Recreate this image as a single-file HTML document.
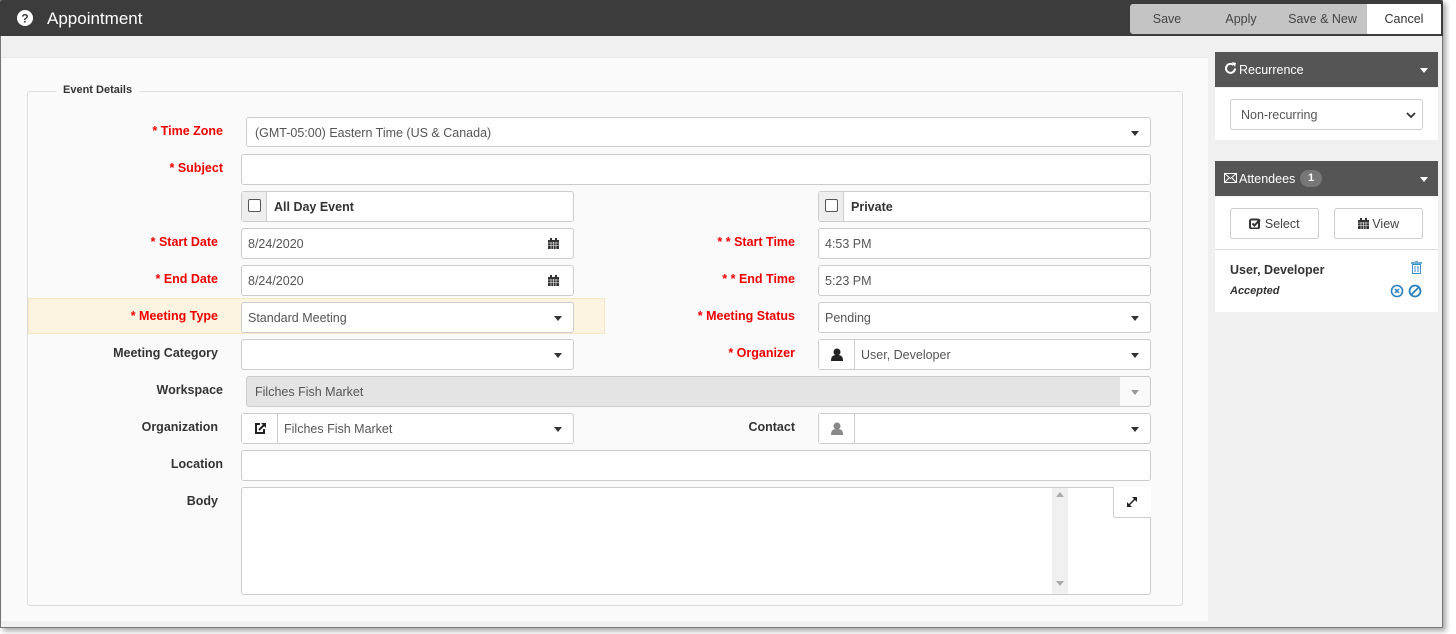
<!DOCTYPE html>
<html><head><style>
*{box-sizing:border-box;margin:0;padding:0}
body{width:1456px;height:634px;background:#fff;font-family:"Liberation Sans",sans-serif;font-size:12px;color:#333;position:relative;overflow:hidden}
.a{position:absolute}
.win{left:0;top:0;width:1443px;height:628px;background:#f0f0f0;border:1px solid #777;box-shadow:3px 3px 5px rgba(0,0,0,.35)}
.hdr{left:0;top:0;width:1443px;height:36px;background:#3c3c3c;border-radius:3px 3px 0 0}
.lbl{font-weight:bold;font-size:12.5px;text-align:right;width:200px;color:#333}
.req{color:#e00}
.in{background:#fff;border:1px solid #ccc;border-radius:3px;height:31px;font-size:12.5px;color:#555;padding-left:8px;line-height:31px}
.caret{position:absolute;right:11px;top:13px;width:0;height:0;border-left:4.5px solid transparent;border-right:4.5px solid transparent;border-top:5px solid #333}
.addon{position:absolute;left:0;top:0;bottom:0;width:36px;border-right:1px solid #ccc;background:#fff}
.btn{color:#444;font-size:12.5px;text-align:center;line-height:32px;height:32px;top:4px}
</style></head><body>
<div class="a win"></div>
<div class="a hdr"></div>
<svg class="a" style="left:17px;top:10px" width="16" height="16"><circle cx="8" cy="8" r="8" fill="#fff"/><text x="8" y="12.5" font-size="12" font-weight="bold" text-anchor="middle" fill="#3c3c3c" font-family="Liberation Sans">?</text></svg>
<div class="a" style="left:47px;top:9px;color:#fff;font-size:17px">Appointment</div>
<div class="a" style="left:1130px;top:4px;width:311px;height:30px;background:#c4c4c4;border-radius:3px"></div>
<div class="a btn" style="left:1130px;width:74px;height:30px;line-height:30px">Save</div>
<div class="a btn" style="left:1204px;width:74px;height:30px;line-height:30px">Apply</div>
<div class="a btn" style="left:1278px;width:89px;height:30px;line-height:30px">Save &amp; New</div>
<div class="a btn" style="left:1367px;width:74px;height:30px;line-height:30px;background:#fff;color:#333">Cancel</div>

<div class="a" style="left:2px;top:57px;width:1206px;height:564px;background:#fafafa;border-top:1px solid #e6e6e6"></div>
<div class="a" style="left:27px;top:91px;width:1156px;height:515px;border:1px solid #ddd;border-radius:3px"></div>
<div class="a" style="left:56px;top:84px;padding:0 7px;background:#fafafa;font-weight:bold;font-size:11px;color:#333">Event Details</div>

<div class="a" style="left:28px;top:298px;width:577px;height:36px;background:#fcf4e1;border:1px solid #f5e6c4"></div>

<div class="a lbl req" style="left:23px;top:124px">* Time Zone</div>
<div class="a lbl req" style="left:23px;top:161px">* Subject</div>
<div class="a lbl req" style="left:18px;top:235px">* Start Date</div>
<div class="a lbl req" style="left:18px;top:272px">* End Date</div>
<div class="a lbl req" style="left:18px;top:309px">* Meeting Type</div>
<div class="a lbl" style="left:18px;top:346px">Meeting Category</div>
<div class="a lbl" style="left:23px;top:383px">Workspace</div>
<div class="a lbl" style="left:18px;top:420px">Organization</div>
<div class="a lbl" style="left:23px;top:457px">Location</div>
<div class="a lbl" style="left:18px;top:494px">Body</div>
<div class="a lbl req" style="left:595px;top:235px">* * Start Time</div>
<div class="a lbl req" style="left:595px;top:272px">* * End Time</div>
<div class="a lbl req" style="left:595px;top:309px">* Meeting Status</div>
<div class="a lbl req" style="left:595px;top:346px">* Organizer</div>
<div class="a lbl" style="left:595px;top:420px">Contact</div>

<div class="a in" style="left:246px;top:117px;width:905px;height:30px;line-height:30px">(GMT-05:00) Eastern Time (US &amp; Canada)<span class="caret"></span></div>
<div class="a in" style="left:241px;top:154px;width:910px"></div>
<div class="a in" style="left:241px;top:191px;width:333px;padding-left:32px;font-weight:bold;color:#333"><span class="addon" style="width:25px;background:#eee"><span class="a" style="left:6px;top:7px;width:13px;height:13px;border:1px solid #555;border-radius:2px;background:#fff"></span></span>All Day Event</div>
<div class="a in" style="left:818px;top:191px;width:333px;padding-left:32px;font-weight:bold;color:#333"><span class="addon" style="width:25px;background:#eee"><span class="a" style="left:6px;top:7px;width:13px;height:13px;border:1px solid #555;border-radius:2px;background:#fff"></span></span>Private</div>
<div class="a in" style="left:241px;top:228px;width:333px;padding-left:6px">8/24/2020<svg class="a" style="right:14px;top:9px" width="11" height="11"><rect x="0" y="2" width="11" height="9" fill="#333"/><rect x="2" y="0" width="2" height="3" fill="#333"/><rect x="7" y="0" width="2" height="3" fill="#333"/><path d="M0 5h11M0 7.5h11M3 4v7M5.5 4v7M8 4v7" stroke="#fff" stroke-width=".6"/></svg></div>
<div class="a in" style="left:241px;top:265px;width:333px;padding-left:6px">8/24/2020<svg class="a" style="right:14px;top:9px" width="11" height="11"><rect x="0" y="2" width="11" height="9" fill="#333"/><rect x="2" y="0" width="2" height="3" fill="#333"/><rect x="7" y="0" width="2" height="3" fill="#333"/><path d="M0 5h11M0 7.5h11M3 4v7M5.5 4v7M8 4v7" stroke="#fff" stroke-width=".6"/></svg></div>
<div class="a in" style="left:818px;top:228px;width:333px;padding-left:6px">4:53 PM</div>
<div class="a in" style="left:818px;top:265px;width:333px;padding-left:6px">5:23 PM</div>
<div class="a in" style="left:241px;top:302px;width:333px;padding-left:6px">Standard Meeting<span class="caret"></span></div>
<div class="a in" style="left:818px;top:302px;width:333px;padding-left:6px">Pending<span class="caret"></span></div>
<div class="a in" style="left:241px;top:339px;width:333px"><span class="caret"></span></div>
<div class="a in" style="left:818px;top:339px;width:333px;padding-left:42px"><span class="addon"><svg class="a" style="left:12px;top:8px" width="12" height="13"><circle cx="6" cy="4" r="3.5" fill="#222"/><path d="M0 13c0-5 2-6 6-6s6 1 6 6z" fill="#222"/></svg></span>User, Developer<span class="caret"></span></div>
<div class="a in" style="left:246px;top:376px;width:905px;background:#e4e4e4;color:#555"><span>Filches Fish Market</span><span class="a" style="right:0;top:0;bottom:0;width:30px;background:#fafafa;border-radius:0 3px 3px 0"></span><span class="caret" style="border-top-color:#999"></span></div>
<div class="a in" style="left:241px;top:413px;width:333px;padding-left:42px"><span class="addon"><svg class="a" style="left:12px;top:8px" width="13" height="13"><path d="M10 7v4H2V2h4" fill="none" stroke="#222" stroke-width="2"/><path d="M7 1h5v5z" fill="#222"/><path d="M5 8l6-6" stroke="#222" stroke-width="2"/></svg></span>Filches Fish Market<span class="caret"></span></div>
<div class="a in" style="left:818px;top:413px;width:333px"><span class="addon"><svg class="a" style="left:12px;top:8px" width="12" height="13"><circle cx="6" cy="4" r="3.5" fill="#888"/><path d="M0 13c0-5 2-6 6-6s6 1 6 6z" fill="#888"/></svg></span><span class="caret"></span></div>
<div class="a in" style="left:241px;top:450px;width:910px"></div>
<div class="a in" style="left:241px;top:487px;width:910px;height:108px"></div>
<div class="a" style="left:1052px;top:488px;width:16px;height:106px;background:#f0f0f0"></div>
<div class="a" style="left:1056px;top:492px;border-left:4px solid transparent;border-right:4px solid transparent;border-bottom:5px solid #aaa"></div>
<div class="a" style="left:1056px;top:581px;border-left:4px solid transparent;border-right:4px solid transparent;border-top:5px solid #aaa"></div>
<div class="a" style="left:1113px;top:487px;width:38px;height:31px;border:1px solid #ccc;border-top:none;border-right:none;background:#fff;border-radius:0 0 0 3px"></div>
<svg class="a" style="left:1126px;top:496px" width="12" height="12"><path d="M2 10l8-8" stroke="#222" stroke-width="1.5"/><path d="M6 1h5v5zM1 6v5h5z" fill="#222"/></svg>

<div class="a" style="left:1215px;top:52px;width:223px;height:35px;background:#555"></div>
<svg class="a" style="left:1224px;top:62px" width="13" height="13"><path d="M11 6.5A4.5 4.5 0 1 1 9.5 3" fill="none" stroke="#fff" stroke-width="2"/><path d="M8 0l4 1-1 4z" fill="#fff"/></svg>
<div class="a" style="left:1239px;top:63px;color:#fff;font-size:12.5px">Recurrence</div>
<div class="a" style="left:1420px;top:68px;border-left:4.5px solid transparent;border-right:4.5px solid transparent;border-top:5px solid #fff"></div>
<div class="a" style="left:1215px;top:88px;width:223px;height:52px;background:#fff"></div>
<div class="a in" style="left:1230px;top:99px;width:193px;height:31px;padding-left:10px;color:#555">Non-recurring<svg class="a" style="right:6px;top:12px" width="10" height="7"><path d="M1 1l4 4 4-4" fill="none" stroke="#333" stroke-width="1.8"/></svg></div>
<div class="a" style="left:1215px;top:161px;width:223px;height:35px;background:#555"></div>
<svg class="a" style="left:1224px;top:173px" width="13" height="10"><rect x=".5" y=".5" width="12" height="9" fill="none" stroke="#fff"/><path d="M.5 .5l6 5 6-5M.5 9.5l4.5-4.5M12.5 9.5L8 5" fill="none" stroke="#fff"/></svg>
<div class="a" style="left:1239px;top:172px;color:#fff;font-size:12.5px">Attendees</div>
<div class="a" style="left:1300px;top:170px;width:22px;height:17px;background:#777;border-radius:9px;color:#fff;font-weight:bold;font-size:11px;text-align:center;line-height:17px">1</div>
<div class="a" style="left:1420px;top:177px;border-left:4.5px solid transparent;border-right:4.5px solid transparent;border-top:5px solid #fff"></div>
<div class="a" style="left:1215px;top:197px;width:223px;height:115px;background:#fff"></div>
<div class="a" style="left:1215px;top:249px;width:223px;height:1px;background:#ddd"></div>
<div class="a in" style="left:1230px;top:208px;width:89px;padding:0;text-align:center;color:#444"><svg style="vertical-align:-1px" width="12" height="11"><rect x="1" y="1.5" width="9" height="9" rx="1.5" fill="none" stroke="#333" stroke-width="2"/><path d="M3.5 5.5l2 2 5.5-6" fill="none" stroke="#333" stroke-width="2"/></svg> Select</div>
<div class="a in" style="left:1334px;top:208px;width:89px;padding:0;text-align:center;color:#444"><svg style="vertical-align:-1px" width="11" height="11"><rect x="0" y="2" width="11" height="9" fill="#333"/><rect x="2" y="0" width="2" height="3" fill="#333"/><rect x="7" y="0" width="2" height="3" fill="#333"/><path d="M0 5h11M0 7.5h11M3 4v7M5.5 4v7M8 4v7" stroke="#fff" stroke-width=".6"/></svg> View</div>
<div class="a" style="left:1230px;top:263px;font-weight:bold;font-size:12.5px;color:#333">User, Developer</div>
<div class="a" style="left:1230px;top:285px;font-weight:bold;font-style:italic;font-size:11px;color:#333">Accepted</div>
<svg class="a" style="left:1411px;top:261px" width="11" height="13"><path d="M0 2h11M4 0h3" stroke="#3a8fc8" stroke-width="1.5"/><rect x="1.5" y="3.5" width="8" height="9" fill="none" stroke="#3a8fc8"/><path d="M4 5v6M7 5v6" stroke="#3a8fc8"/></svg>
<svg class="a" style="left:1390px;top:284px" width="32" height="14"><circle cx="7" cy="7" r="5.5" fill="none" stroke="#2a7fc0" stroke-width="1.6"/><path d="M5 5l4 4M9 5l-4 4" stroke="#2a7fc0" stroke-width="1.5"/><circle cx="25" cy="7" r="5.5" fill="none" stroke="#2a7fc0" stroke-width="1.8"/><path d="M21 11l8-8" stroke="#2a7fc0" stroke-width="1.8"/></svg>
</body></html>
